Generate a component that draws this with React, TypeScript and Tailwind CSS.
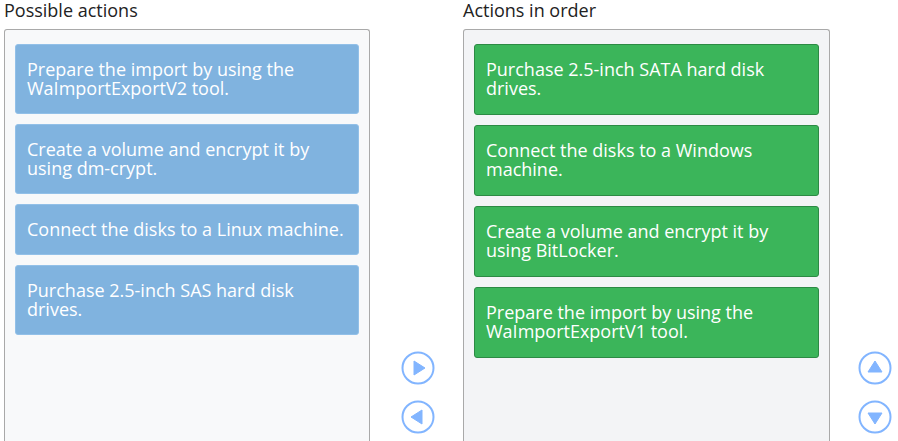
import React from 'react';

const leftItems = [
  'Prepare the import by using the WaImportExportV2 tool.',
  'Create a volume and encrypt it by using dm-crypt.',
  'Connect the disks to a Linux machine.',
  'Purchase 2.5-inch SAS hard disk drives.',
];

const rightItems = [
  'Purchase 2.5-inch SATA hard disk drives.',
  'Connect the disks to a Windows machine.',
  'Create a volume and encrypt it by using BitLocker.',
  'Prepare the import by using the WaImportExportV1 tool.',
];

const CircleButton: React.FC<{ dir: 'right' | 'left' | 'up' | 'down' }> = ({ dir }) => {
  const points = {
    right: '13,10 24,17 13,24',
    left: '21,10 10,17 21,24',
    up: '10,21 17,10 24,21',
    down: '10,13 24,13 17,24',
  }[dir];
  return (
    <button className="w-[34px] h-[34px] flex items-center justify-center">
      <svg width="34" height="34" viewBox="0 0 34 34">
        <circle cx="17" cy="17" r="15.5" fill="white" stroke="#82b5ff" strokeWidth="2" />
        <polygon points={points} fill="#82b5ff" strokeLinejoin="round" stroke="#82b5ff" strokeWidth="1" />
      </svg>
    </button>
  );
};

const App: React.FC = () => {
  return (
    <div
      className="w-[898px] h-[441px] overflow-hidden bg-white flex pl-[4px] text-[#222]"
      style={{ fontFamily: '"Open Sans", "Noto Sans", sans-serif' }}
    >
      <div className="w-[366px] flex flex-col">
        <h2 className="h-[29px] text-[18px] leading-[19px] pt-[0.5px]">Possible actions</h2>
        <div className="flex-1 border border-[#a9a9a9] border-b-0 rounded-t-[3px] bg-[#f8f9fa] pt-[14px] px-[10px] flex flex-col gap-[10px]">
          {leftItems.map((t) => (
            <div
              key={t}
              className="bg-[#80b3df] border border-[#92c0e8] rounded-[3px] text-white text-[18px] leading-[19px] px-[11px] py-[15px]"
            >
              {t}
            </div>
          ))}
        </div>
      </div>

      <div className="w-[93px] flex flex-col items-center pt-[351px] pl-[2px] gap-[15px]">
        <CircleButton dir="right" />
        <CircleButton dir="left" />
      </div>

      <div className="w-[367px] flex flex-col">
        <h2 className="h-[29px] text-[18px] leading-[19px] pt-[0.5px]">Actions in order</h2>
        <div className="flex-1 border border-[#a9a9a9] border-b-0 rounded-t-[3px] bg-[#f3f4f6] pt-[14px] px-[10px] flex flex-col gap-[10px]">
          {rightItems.map((t) => (
            <div
              key={t}
              className="bg-[#3bb55a] border border-[#2c8a44] rounded-[3px] text-white text-[18px] leading-[19px] px-[11px] pt-[15px] pb-[16px]"
            >
              {t}
            </div>
          ))}
        </div>
      </div>

      <div className="flex-1 flex flex-col items-center pt-[351px] pl-[22px] gap-[15px]">
        <CircleButton dir="up" />
        <CircleButton dir="down" />
      </div>
    </div>
  );
};

export default App;
